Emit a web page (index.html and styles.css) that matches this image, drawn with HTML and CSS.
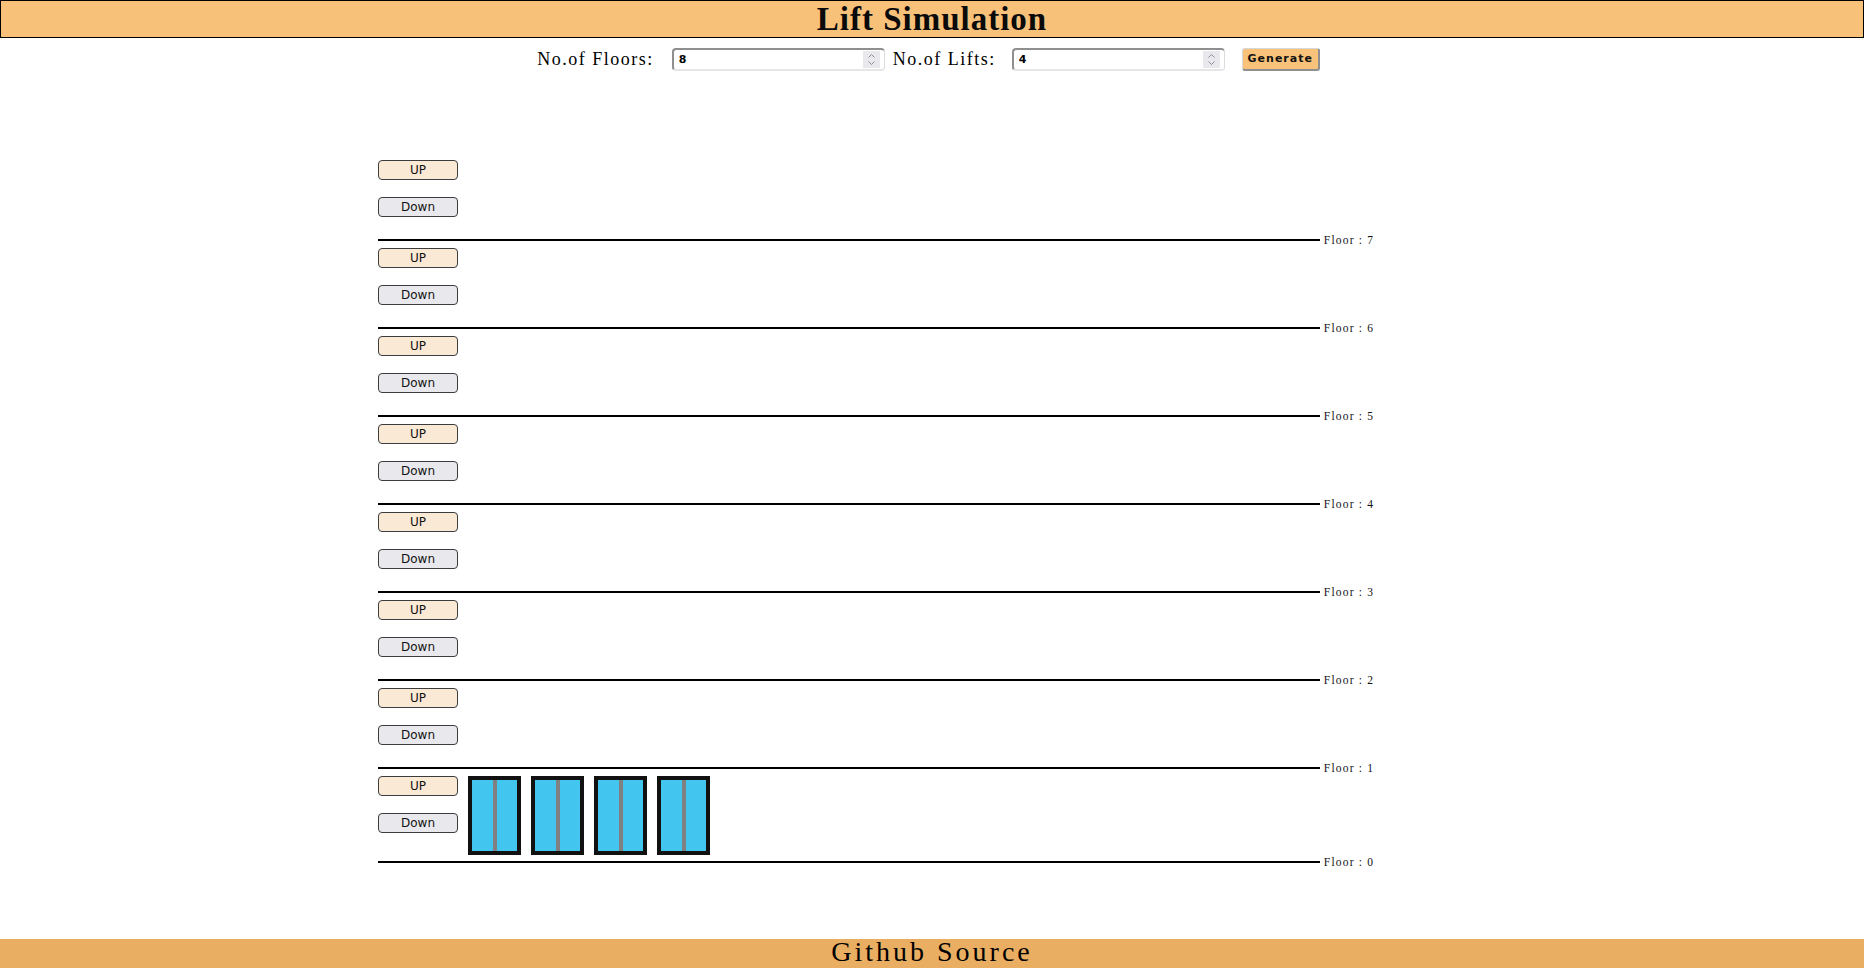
FILE: index.html
```html
<!DOCTYPE html>
<html lang="en">
<head>
<meta charset="utf-8">
<title>Lift Simulation</title>
<link rel="stylesheet" href="styles.css">
</head>
<body>
<header class="topbar">
  <h1 class="title">Lift Simulation</h1>
</header>

<form class="controls">
  <label class="ctl-label" for="floors">No.of Floors:</label>
  <div class="num-input num-input-floors">
    <input id="floors" class="num-field" type="text" value="8">
    <span class="spin"><svg width="9" height="13" viewBox="0 0 9 13"><path d="M1.5 4.5 L4.5 1.5 L7.5 4.5" fill="none" stroke="#8d8d95" stroke-width="1"/><path d="M1.5 8.5 L4.5 11.5 L7.5 8.5" fill="none" stroke="#8d8d95" stroke-width="1"/></svg></span>
  </div>
  <label class="ctl-label" for="lifts">No.of Lifts:</label>
  <div class="num-input">
    <input id="lifts" class="num-field" type="text" value="4">
    <span class="spin"><svg width="9" height="13" viewBox="0 0 9 13"><path d="M1.5 4.5 L4.5 1.5 L7.5 4.5" fill="none" stroke="#8d8d95" stroke-width="1"/><path d="M1.5 8.5 L4.5 11.5 L7.5 8.5" fill="none" stroke="#8d8d95" stroke-width="1"/></svg></span>
  </div>
  <button type="button" class="generate">Generate</button>
</form>

<main class="building">
  <section class="floor">
    <div class="floor-body">
      <div class="calls"><button class="btn-up">UP</button><button class="btn-down">Down</button></div>
    </div>
    <div class="floor-line"><span class="rule"></span><span class="floor-label">Floor : 7</span></div>
  </section>
  <section class="floor">
    <div class="floor-body">
      <div class="calls"><button class="btn-up">UP</button><button class="btn-down">Down</button></div>
    </div>
    <div class="floor-line"><span class="rule"></span><span class="floor-label">Floor : 6</span></div>
  </section>
  <section class="floor">
    <div class="floor-body">
      <div class="calls"><button class="btn-up">UP</button><button class="btn-down">Down</button></div>
    </div>
    <div class="floor-line"><span class="rule"></span><span class="floor-label">Floor : 5</span></div>
  </section>
  <section class="floor">
    <div class="floor-body">
      <div class="calls"><button class="btn-up">UP</button><button class="btn-down">Down</button></div>
    </div>
    <div class="floor-line"><span class="rule"></span><span class="floor-label">Floor : 4</span></div>
  </section>
  <section class="floor">
    <div class="floor-body">
      <div class="calls"><button class="btn-up">UP</button><button class="btn-down">Down</button></div>
    </div>
    <div class="floor-line"><span class="rule"></span><span class="floor-label">Floor : 3</span></div>
  </section>
  <section class="floor">
    <div class="floor-body">
      <div class="calls"><button class="btn-up">UP</button><button class="btn-down">Down</button></div>
    </div>
    <div class="floor-line"><span class="rule"></span><span class="floor-label">Floor : 2</span></div>
  </section>
  <section class="floor">
    <div class="floor-body">
      <div class="calls"><button class="btn-up">UP</button><button class="btn-down">Down</button></div>
    </div>
    <div class="floor-line"><span class="rule"></span><span class="floor-label">Floor : 1</span></div>
  </section>
  <section class="floor">
    <div class="floor-body">
      <div class="calls"><button class="btn-up">UP</button><button class="btn-down">Down</button></div>
      <div class="lifts">
        <div class="lift"><span class="door door-l"></span><span class="door door-r"></span></div>
        <div class="lift"><span class="door door-l"></span><span class="door door-r"></span></div>
        <div class="lift"><span class="door door-l"></span><span class="door door-r"></span></div>
        <div class="lift"><span class="door door-l"></span><span class="door door-r"></span></div>
      </div>
    </div>
    <div class="floor-line"><span class="rule"></span><span class="floor-label">Floor : 0</span></div>
  </section>
</main>

<footer class="footer">Github Source</footer>
</body>
</html>
```

FILE: styles.css
```css
html, body {
  margin: 0;
  padding: 0;
  background: #ffffff;
}

body {
  font-family: "Liberation Serif", "Times New Roman", serif;
  color: #000;
  letter-spacing: 1.5px;
}

.topbar {
  height: 36px;
  border: 1px solid #000;
  background: #f8c17a;
  display: flex;
  align-items: center;
  justify-content: center;
}

.title {
  margin: 0;
  font-size: 33px;
  font-weight: bold;
  letter-spacing: 1px;
  line-height: 36px;
  color: #0a0a0a;
}

.controls {
  margin: 9px 0 0 0;
  height: 24px;
  display: flex;
  align-items: center;
  justify-content: center;
  padding-right: 7px;
}

.ctl-label {
  font-size: 18px;
  letter-spacing: 1.5px;
  line-height: 24px;
}

.num-input {
  width: 210px;
  height: 19px;
  margin-left: 16px;
  margin-right: 10px;
  display: flex;
  align-items: center;
  border-style: solid;
  border-width: 2px 1px 2px 2px;
  border-color: #8f8f8f #dcdcdc #e6e6e6 #8f8f8f;
  border-radius: 4px;
  background: #fff;
}

.num-input-floors {
  margin-left: 18px;
  margin-right: 8px;
}

.num-field {
  flex: 1;
  min-width: 0;
  border: none;
  outline: none;
  padding: 0 0 0 5px;
  margin: 0;
  background: transparent;
  font-family: "DejaVu Sans", sans-serif;
  font-weight: bold;
  font-size: 11px;
  letter-spacing: 0;
  color: #000;
}

.spin {
  width: 17px;
  height: 17px;
  margin-right: 4px;
  background: #e9e9ed;
  display: flex;
  align-items: center;
  justify-content: center;
}

.generate {
  margin-left: 7px;
  width: 78px;
  height: 23px;
  padding: 0;
  background: #f8c27a;
  border-style: solid;
  border-width: 1px 2px 2px 1px;
  border-color: #d8d8d8 #8f8f8f #8f8f8f #d8d8d8;
  border-radius: 3px;
  font-family: "DejaVu Sans", sans-serif;
  font-weight: bold;
  font-size: 11px;
  letter-spacing: 1px;
  color: #111;
}

.building {
  width: 1108px;
  margin: 82px auto 0 auto;
}

.floor-body {
  display: flex;
  align-items: flex-start;
  padding: 7px 0 6px 0;
}

.calls {
  display: flex;
  flex-direction: column;
  width: 80px;
  height: 73px;
}

.calls button {
  width: 80px;
  height: 20px;
  padding: 0;
  border: 1px solid #3c3c3c;
  border-radius: 4px;
  font-family: "DejaVu Sans", sans-serif;
  font-size: 12px;
  letter-spacing: 0;
  color: #111;
}

.btn-up {
  background: #fae9d5;
  margin-bottom: 17px;
}

.btn-down {
  background: #e9e9ed;
}

.lifts {
  display: flex;
  gap: 10px;
  margin-left: 10px;
}

.lift {
  width: 45px;
  height: 71px;
  border: 4px solid #111;
  background: #42c5ef;
  display: flex;
}

.door {
  flex: 1;
  height: 100%;
}

.door-l {
  border-right: 2px solid #808080;
}

.door-r {
  border-left: 2px solid #808080;
}

.floor-line {
  height: 2px;
  display: flex;
  align-items: center;
}

.rule {
  width: 85%;
  height: 2px;
  background: #000;
}

.floor-label {
  margin-left: 4px;
  font-size: 11.5px;
  letter-spacing: 1.2px;
  line-height: 14px;
  white-space: nowrap;
  color: #111;
}

.footer {
  margin-top: 76px;
  height: 30px;
  background: #eaae62;
  text-align: center;
  font-size: 28px;
  letter-spacing: 3px;
  line-height: 26px;
}
```
